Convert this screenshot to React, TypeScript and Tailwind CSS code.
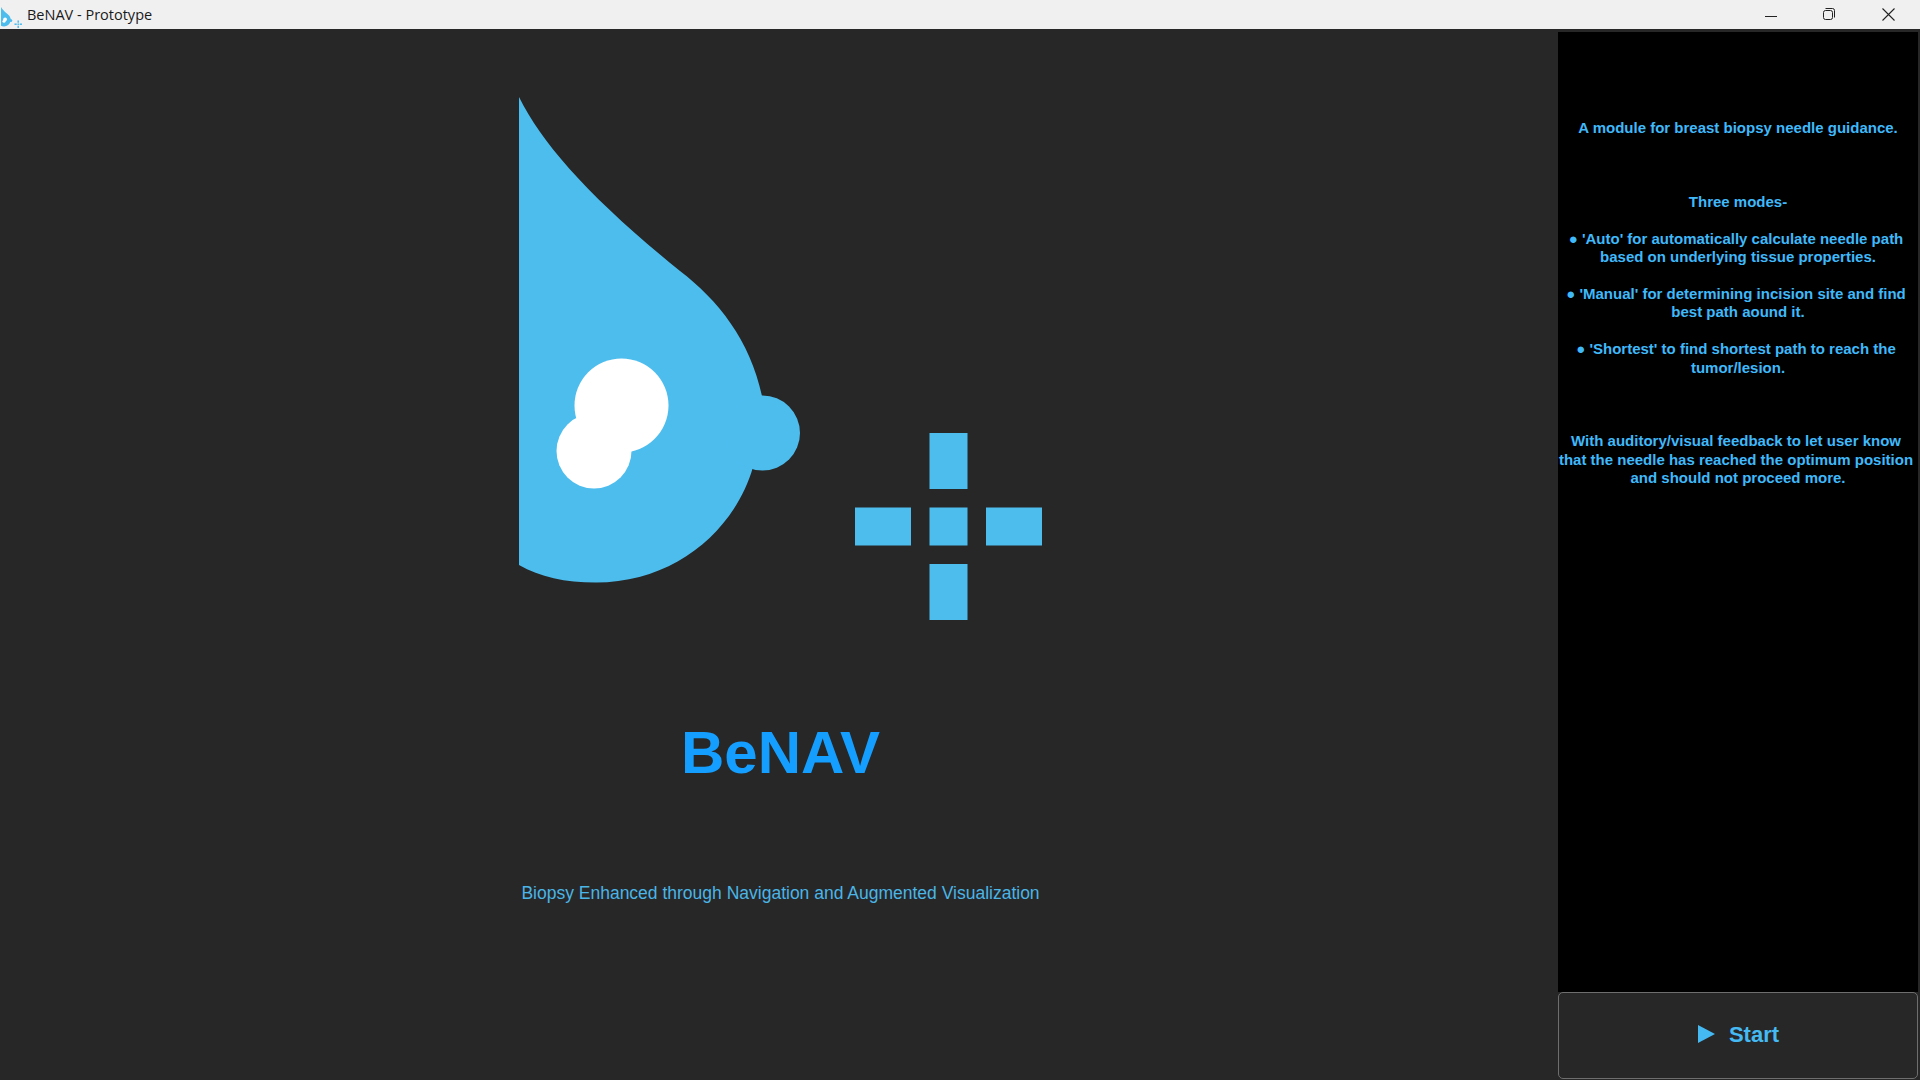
function Logo({ className }: { className: string }) {
  return (
    <svg className={className} viewBox="519 97 524 524" aria-hidden="true">
      <path
        fill="#4dbdee"
        d="M519 97 C 543 145, 590 198, 680 271 C 718 300, 750 340, 762 396 L 753 467 C 735 530, 675 582.5, 596 582.5 C 565 582.5, 540 577, 519 565 Z"
      />
      <circle cx="762.5" cy="433" r="37.5" fill="#4dbdee" />
      <circle cx="621.5" cy="405.5" r="47" fill="#ffffff" />
      <circle cx="594" cy="451" r="37.5" fill="#ffffff" />
      <g fill="#4dbdee">
        <rect x="929.5" y="433" width="38" height="56" />
        <rect x="929.5" y="507.5" width="38" height="38" />
        <rect x="929.5" y="564" width="38" height="56" />
        <rect x="855" y="507.5" width="56" height="38" />
        <rect x="986" y="507.5" width="56" height="38" />
      </g>
    </svg>
  );
}

const lines: { t: string; wrapped?: boolean }[] = [
  { t: "A module for breast biopsy needle guidance." },
  { t: "" },
  { t: "" },
  { t: "" },
  { t: "Three modes-" },
  { t: "" },
  { t: "● 'Auto' for automatically calculate needle path", wrapped: true },
  { t: "based on underlying tissue properties." },
  { t: "" },
  { t: "● 'Manual' for determining incision site and find", wrapped: true },
  { t: "best path aound it." },
  { t: "" },
  { t: "● 'Shortest' to find shortest path to reach the", wrapped: true },
  { t: "tumor/lesion." },
  { t: "" },
  { t: "" },
  { t: "" },
  { t: "With auditory/visual feedback to let user know", wrapped: true },
  { t: "that the needle has reached the optimum position", wrapped: true },
  { t: "and should not proceed more." },
];

export default function App() {
  return (
    <div className="flex h-[1080px] w-[1920px] flex-col overflow-hidden bg-[#272727] font-['Liberation_Sans',sans-serif]">
      <header className="flex h-[29px] shrink-0 items-center bg-[#f0f0f0] text-[#1a1a1a]">
        <Logo className="ml-[1px] mt-[5px] h-[21px] w-[21px]" />
        <span className="ml-[5px] font-['Open_Sans',sans-serif] text-[14.5px]">BeNAV - Prototype</span>
        <div className="ml-auto flex items-center">
          <svg className="mr-[46px] h-3 w-3" viewBox="0 0 12 12">
            <path d="M0 7.5h12" stroke="#222" strokeWidth="1" fill="none" />
          </svg>
          <svg className="mb-[1px] mr-[47px] h-3 w-3" viewBox="0 0 12 12">
            <rect x="0.5" y="2.5" width="9" height="9" rx="2" stroke="#222" fill="none" />
            <path d="M2.5 0.5h7a2 2 0 0 1 2 2v7" stroke="#222" fill="none" />
          </svg>
          <svg className="mr-[25px] h-[13px] w-[13px]" viewBox="0 0 13 13">
            <path d="M0.5 0.5l12 12M12.5 0.5l-12 12" stroke="#222" strokeWidth="1.1" fill="none" />
          </svg>
        </div>
      </header>
      <div className="flex min-h-0 flex-1">
        <main className="flex w-[1558px] flex-col items-center pt-[68px]">
          <Logo className="ml-[3px] h-[524px] w-[524px]" />
          <h1 className="ml-[3px] mt-[98px] text-[60px] font-bold leading-[68px] text-[#149eff]">BeNAV</h1>
          <p className="ml-[3px] mt-[95px] text-[17.5px] leading-[22px] text-[#4ab5e6]">
            Biopsy Enhanced through Navigation and Augmented Visualization
          </p>
        </main>
        <aside className="mr-[2px] flex w-[360px] flex-col pt-[3px] pb-[1px]">
          <div className="flex-1 bg-black pt-[87.4px] text-center text-[15px] font-bold leading-[18.42px] text-[#3fb9fa]">
            {lines.map((l, i) => (
              <div key={i} className={l.wrapped ? "h-[18.42px] whitespace-nowrap pr-[4px]" : "h-[18.42px] whitespace-nowrap"}>
                {l.t}
              </div>
            ))}
          </div>
          <button className="flex h-[87px] shrink-0 items-center justify-center gap-[14px] rounded-[5px] border border-[#6e6e6e] bg-[#272727] pb-[3px] pl-[1px] text-[22px] font-bold text-[#45b9f2]">
            <svg className="h-[18px] w-[17px]" viewBox="0 0 17 18">
              <path d="M0 0L17 9L0 18Z" fill="#45b9f2" />
            </svg>
            Start
          </button>
        </aside>
      </div>
    </div>
  );
}
